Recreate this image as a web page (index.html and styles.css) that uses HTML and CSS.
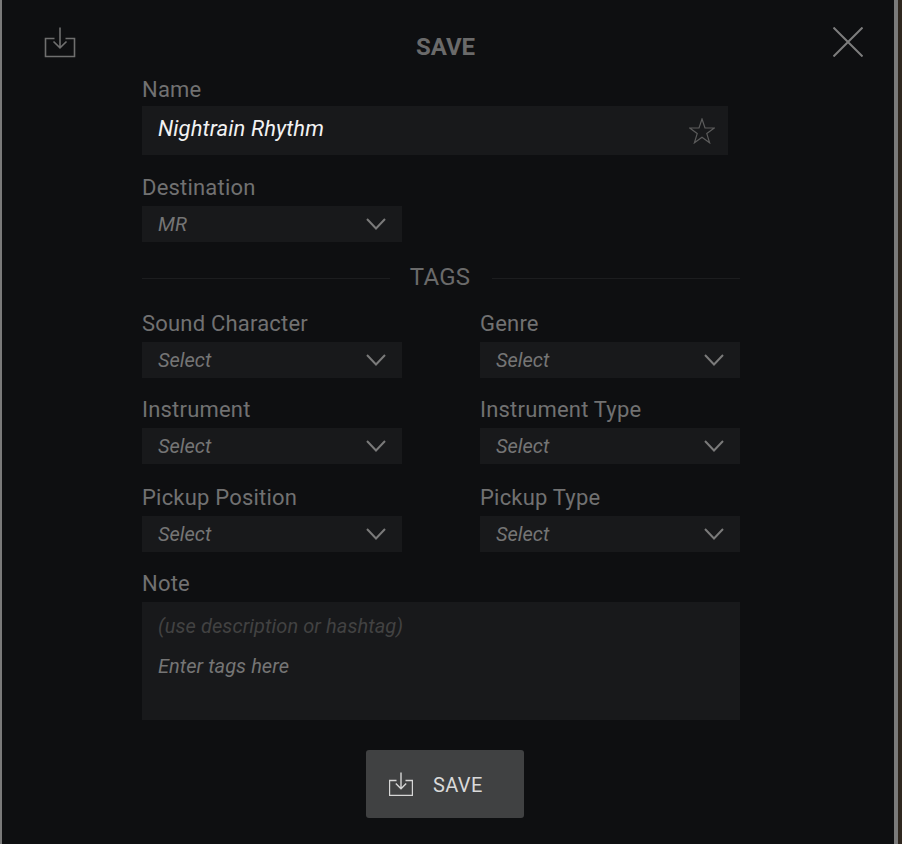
FILE: index.html
```html
<!DOCTYPE html>
<html lang="en">
<head>
<meta charset="utf-8">
<title>Save</title>
<link rel="stylesheet" href="styles.css">
</head>
<body>
<div class="window">
  <main class="modal">
    <header class="head">
      <svg class="head-icon" viewBox="0 0 32 32" width="32" height="32" aria-hidden="true"><path d="M10.500 11.500H1.500V29.500H30.500V11.500H21.500M16 0.500V20.500M9.500 14.500L16 20.800L22.500 14.500"/></svg>
      <h1 class="title">SAVE</h1>
      <svg class="close" viewBox="0 0 30 30" width="30" height="30" aria-hidden="true"><path d="M0.500 0.500L29.500 29.500M29.500 0.500L0.500 29.500"/></svg>
    </header>
    <form class="form">
      <div class="field name-field">
        <label class="label">Name</label>
        <div class="name-input">
          <span>Nightrain Rhythm</span>
          <svg class="star" viewBox="0 0 26 26" width="26" height="26" aria-hidden="true"><path d="M13 1L16 10H25.300L17.800 15.600L20.600 24.800L13 19.200L5.400 24.800L8.200 15.600L0.700 10H10Z"/></svg>
        </div>
      </div>
      <div class="field dest-field">
        <label class="label">Destination</label>
        <div class="select"><span>MR</span><svg class="chev" viewBox="0 0 20 12" width="20" height="12" aria-hidden="true"><path d="M1 1L10 10.500L19 1"/></svg></div>
      </div>
      <div class="divider"><span>TAGS</span></div>
      <div class="grid">
        <div class="field"><label class="label">Sound Character</label><div class="select"><span>Select</span><svg class="chev" viewBox="0 0 20 12" width="20" height="12" aria-hidden="true"><path d="M1 1L10 10.500L19 1"/></svg></div></div>
        <div class="field"><label class="label">Genre</label><div class="select"><span>Select</span><svg class="chev" viewBox="0 0 20 12" width="20" height="12" aria-hidden="true"><path d="M1 1L10 10.500L19 1"/></svg></div></div>
        <div class="field"><label class="label">Instrument</label><div class="select"><span>Select</span><svg class="chev" viewBox="0 0 20 12" width="20" height="12" aria-hidden="true"><path d="M1 1L10 10.500L19 1"/></svg></div></div>
        <div class="field"><label class="label">Instrument Type</label><div class="select"><span>Select</span><svg class="chev" viewBox="0 0 20 12" width="20" height="12" aria-hidden="true"><path d="M1 1L10 10.500L19 1"/></svg></div></div>
        <div class="field pickup"><label class="label">Pickup Position</label><div class="select"><span>Select</span><svg class="chev" viewBox="0 0 20 12" width="20" height="12" aria-hidden="true"><path d="M1 1L10 10.500L19 1"/></svg></div></div>
        <div class="field pickup"><label class="label">Pickup Type</label><div class="select"><span>Select</span><svg class="chev" viewBox="0 0 20 12" width="20" height="12" aria-hidden="true"><path d="M1 1L10 10.500L19 1"/></svg></div></div>
      </div>
      <div class="field note-field">
        <label class="label">Note</label>
        <div class="note">
          <p class="hint">(use description or hashtag)</p>
          <p class="tags">Enter tags here</p>
        </div>
      </div>
      <div class="actions">
        <button class="save" type="button">
          <svg class="save-icon" viewBox="0 0 24 24" width="24" height="24" aria-hidden="true"><path d="M7.500 8.500H0.500V23.500H23.500V8.500H16.500M12 0.500V16.500M6.800 11.500L12 16.800L17.200 11.500"/></svg>
          <span class="save-text">SAVE</span>
        </button>
      </div>
    </form>
  </main>
</div>
</body>
</html>
```
FILE: styles.css
```css
* { box-sizing: border-box; }
html, body { margin: 0; height: 100%; }
body {
  background: #2f271f;
  font-family: Roboto, "Liberation Sans", sans-serif;
  overflow: hidden;
}
.window { display: flex; height: 844px; width: 902px; }
.modal {
  width: 898px;
  height: 844px;
  background: #0e0f11;
  border-left: 2px solid #7a7a7a;
  border-right: 4px solid #7a7a7a;
  display: flex;
  flex-direction: column;
}
.head {
  height: 76px;
  display: flex;
  justify-content: space-between;
  align-items: flex-start;
  padding: 27px 31px 0 42px;
}
.head-icon path, .save-icon path, .close path, .star path, .chev path { fill: none; stroke-linejoin: miter; }
.head-icon path { stroke: #6f6f6f; stroke-width: 1.6; }
.close path { stroke: #7d7d7d; stroke-width: 2; }
.title {
  margin: 6px 0 0 -18px;
  font-size: 24px;
  line-height: 28px;
  font-weight: 700;
  color: #6a6a6a;
}
.form { padding-left: 140px; width: 738px; }
.label {
  display: block;
  font-size: 22px;
  line-height: 26px;
  padding-top: 2px;
  color: #717171;
  letter-spacing: 0.2px;
}
.name-field .label { line-height: 28px; padding-top: 0; }
.name-input {
  margin-top: 2px;
  width: 586px;
  height: 49px;
  background: #18191b;
  display: flex;
  align-items: center;
  justify-content: space-between;
  padding: 0 13px 0 16px;
  color: #f2f2f2;
  font-size: 22px;
  letter-spacing: 0.1px;
  font-style: italic;
}
.name-input span { margin-top: -4px; }
.star path { stroke: #5c5c5c; stroke-width: 1.2; }
.dest-field { margin-top: 18px; }
.select {
  margin-top: 5px;
  width: 260px;
  height: 36px;
  background: #18191b;
  display: flex;
  align-items: center;
  justify-content: space-between;
  padding: 0 16px;
  color: #757575;
  font-size: 20px;
  font-style: italic;
}
.chev path { stroke: #7a7a7a; stroke-width: 2; }
.divider {
  width: 598px;
  margin-top: 23px;
  display: flex;
  align-items: center;
  color: #6a6a6a;
  font-size: 24px;
  line-height: 24px;
}
.divider span { margin: 0 22px 2px 20px; letter-spacing: 0.2px; }
.divider::before, .divider::after { content: ""; flex: 1; height: 1px; background: #1c1d1f; }
.grid {
  margin-top: 18px;
  display: grid;
  grid-template-columns: 260px 260px;
  column-gap: 78px;
  row-gap: 17px;
}
.pickup { margin-top: 2px; }
.note-field { margin-top: 17px; }
.note {
  margin-top: 5px;
  width: 598px;
  height: 118px;
  background: #18191b;
  padding: 12px 16px;
  font-size: 20px;
  font-style: italic;
}
.note p { margin: 0; line-height: 24px; }
.hint { color: #424242; letter-spacing: 0.08px; }
.note .tags { color: #757575; margin-top: 16px; letter-spacing: 0.05px; }
.actions { display: flex; margin-top: 30px; padding-left: 224px; }
.save {
  width: 158px;
  height: 68px;
  background: #404142;
  border: 0;
  border-radius: 3px;
  display: flex;
  align-items: center;
  gap: 20px;
  padding: 0 0 0 23px;
  color: #d9d9d9;
  font: 400 20px Roboto, "Liberation Sans", sans-serif;
  letter-spacing: 0.4px;
}
.save-text { margin-top: 2px; }
.save-icon path { stroke: #d6d6d6; stroke-width: 1.4; }
```
